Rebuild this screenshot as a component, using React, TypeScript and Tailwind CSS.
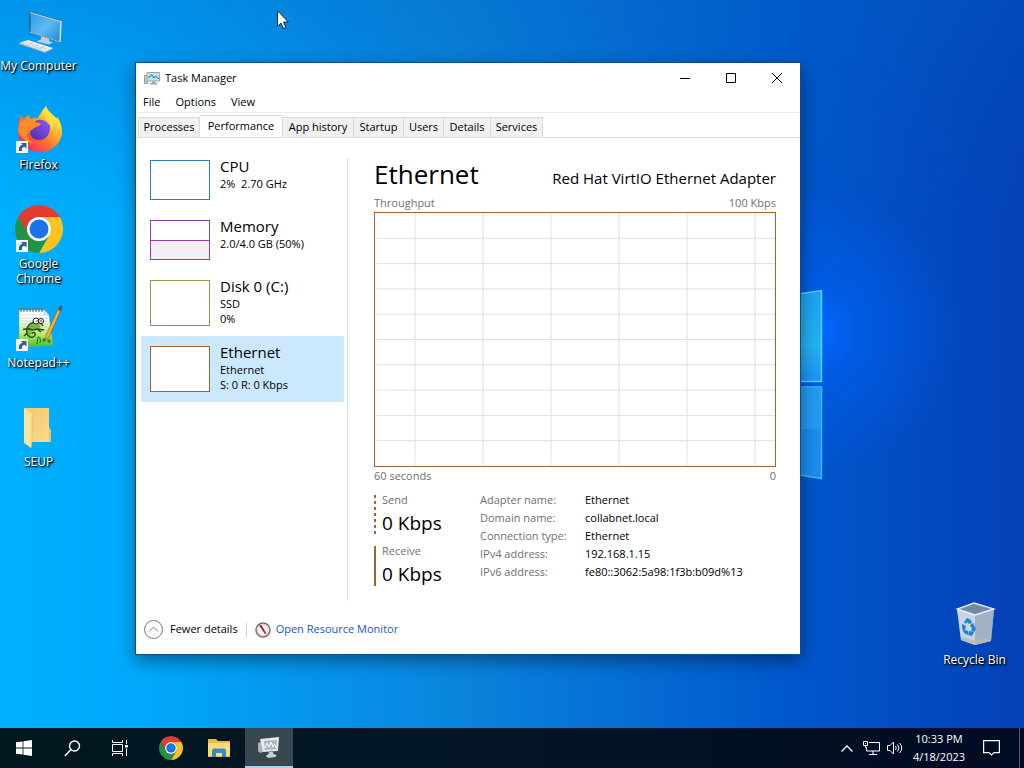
import { useState } from 'react';
import type { ReactNode } from 'react';
import clsx from 'clsx';

type TabName = 'Processes' | 'Performance' | 'App history' | 'Startup' | 'Users' | 'Details' | 'Services';

const tabs: { name: TabName; width: string }[] = [
    { name: 'Processes', width: 'w-[62px]' },
    { name: 'Performance', width: 'w-[83px]' },
    { name: 'App history', width: 'w-[71px]' },
    { name: 'Startup', width: 'w-[50px]' },
    { name: 'Users', width: 'w-10' },
    { name: 'Details', width: 'w-[47px]' },
    { name: 'Services', width: 'w-[52px]' },
];

const adapterInfo = [
    ['Adapter name:', 'Ethernet'],
    ['Domain name:', 'collabnet.local'],
    ['Connection type:', 'Ethernet'],
    ['IPv4 address:', '192.168.1.15'],
    ['IPv6 address:', 'fe80::3062:5a98:1f3b:b09d%13'],
];

function ShortcutArrow() {
    return (
        <g>
            <rect x="1" y="35" width="12" height="12" fill="#f4f6f8" />
            <path d="M4 45c-.6-3.600.8-5.800 3.600-6.200L6 37h5.500v5.500L9.600 40.700C7.500 41 6.500 42.500 7 45z" fill="#2c5f9e" />
        </g>
    );
}

function ComputerIcon() {
    return (
        <svg viewBox="0 0 48 48" className="size-12">
            <defs>
                <linearGradient id="screen" x1="0" y1="0" x2="1" y2="1">
                    <stop offset="0" stopColor="#2f9be8" />
                    <stop offset=".5" stopColor="#5fb9f4" />
                    <stop offset="1" stopColor="#1f86d6" />
                </linearGradient>
            </defs>
            <path d="M26 29l8 2v3l4 1.500-4 2-13-3 5-2z" fill="#b9cfe0" />
            <path d="M15 5l31 9-1 21-30-10z" fill="url(#screen)" stroke="#2b4c68" strokeWidth="1" />
            <path d="M15 5l31 9v1L15 6z" fill="#c9d8e4" />
            <path d="M46 14l-1 21" stroke="#d8e2ea" strokeWidth="1.500" />
            <path d="M15 25l30 10" stroke="#a9bccb" />
            <path d="M4 36l9-3 25 8-8 4z" fill="#eef1f4" />
            <path d="M4 36l26 9 8-4v1l-8 4-26-9z" fill="#a7b0b8" />
            <path d="M7 36l24 7.500M10 35l24 7.500M12 38l6-3M18 40l6-3M24 42l6-3" stroke="#b8bfc6" strokeWidth=".6" />
        </svg>
    );
}

function FirefoxIcon() {
    return (
        <svg viewBox="0 0 48 48" className="size-12">
            <defs>
                <linearGradient id="fox" x1=".9" y1=".1" x2=".15" y2=".9">
                    <stop offset="0" stopColor="#fff44f" />
                    <stop offset=".35" stopColor="#ffb52a" />
                    <stop offset=".65" stopColor="#ff6a33" />
                    <stop offset="1" stopColor="#ee2b6c" />
                </linearGradient>
                <linearGradient id="globe" x1="1" y1="0" x2="0" y2="1">
                    <stop offset="0" stopColor="#9059ff" />
                    <stop offset="1" stopColor="#4a2da8" />
                </linearGradient>
            </defs>
            <path d="M31 0c1 4 4 6 7 9 1.500 1.500 2 3 2.500 4.500L42 11c4 5 5 10 5 14 0 12-10 21-22 21S3 37 3 25c0-7 1-12 3-16 1 2 2 3 3 4 1-1 3-3 5-4 0 2 1 3 2 4 3-1.500 5-1.200 7-.5C23 10 26 8 27 5c1-2 3-3 4-5z" fill="url(#fox)" />
            <path d="M18 17c3-3 6-4 9-3 3 .5 5 2 6 4l2 1c1 9-4 15-11 15-6 0-9-4-9-9 0-3 1-6 3-8z" fill="url(#globe)" />
            <path d="M5 16c4-2 9-3 13-1 2 1.500 5 2 8 2-1 3-3 3.500-5 4-3 1-3 3-6 4l-3 3c0 6 5 9 10 9-8 2-17-5-19-13z" fill="#ff8a28" />
            <path d="M31 0c-3 5-4 9 0 13 4 3 6 7 5 12 3-3 3-7 1-10 4 1 6 6 6 10 3-7 0-12-5-16-3-3-6-5-7-9z" fill="#ffdf3c" />
            <ShortcutArrow />
        </svg>
    );
}

function ChromeShape() {
    return (
        <g>
            <path d="M3.220 12A24 24 0 0 1 44.780 12H24A12 12 0 0 0 13.610 30z" fill="#e33b2e" />
            <path d="M44.780 12A24 24 0 0 1 24 48L34.390 30A12 12 0 0 0 24 12z" fill="#fcc31e" />
            <path d="M24 48A24 24 0 0 1 3.220 12L13.610 30A12 12 0 0 0 34.390 30z" fill="#229342" />
            <circle cx="24" cy="24" r="12" fill="#fff" />
            <circle cx="24" cy="24" r="9.500" fill="#1a73e8" />
        </g>
    );
}

function NotepadIcon() {
    return (
        <svg viewBox="0 0 48 48" className="size-12">
            <defs>
                <linearGradient id="page" x1="0" y1="0" x2="0" y2="1">
                    <stop offset=".2" stopColor="#ffffff" />
                    <stop offset=".6" stopColor="#c9ee7a" />
                    <stop offset="1" stopColor="#3fc41c" />
                </linearGradient>
            </defs>
            <path d="M4 6h25l5 5 4 30-30 2H4z" fill="url(#page)" stroke="#8d9a86" strokeWidth=".6" />
            <path d="M5 11h25M5 14h28M5 17h28M5 20h29M5 23h29M5 26h29" stroke="#a8c4cc" strokeWidth=".5" />
            <path d="M29 6v5h5" fill="#e8eef0" stroke="#8d9a86" strokeWidth=".5" />
            <path d="M6 4v4M9 4v4M12 4v4M15 4v4M18 4v4M21 4v4M24 4v4M27 4v4" stroke="#566" strokeWidth="1" />
            <path d="M14 21c4-3 10-2 12 1-1 4-7 2-9 5-2 2 0 4-2 5-4-3-4-8-1-11z" fill="#70bd3c" />
            <path d="M28 22c-2-4-9-5-13-2-5 4-4 11 0 13 4 1 6-2 5-4-1-1-3-1-3 1M8 25.500l5-1 5 1.500 5-1 6 1M12 29l-3 3M22 25l4 3" fill="none" stroke="#24471b" strokeWidth="1.400" />
            <circle cx="21" cy="17" r="3" fill="#fff" stroke="#222" />
            <circle cx="26" cy="17" r="2.500" fill="#fff" stroke="#222" />
            <circle cx="22" cy="17" r=".8" fill="#111" />
            <circle cx="26" cy="17" r=".8" fill="#111" />
            <path d="M22 40l1-7c2-1 3 3 2 6M27 36h4M29 34v4M32 37h4M34 35v4" fill="none" stroke="#25542b" strokeWidth=".9" />
            <path d="M44 3l3 1-13 29-3 3v-5z" fill="#f0b43c" stroke="#80531b" strokeWidth=".6" />
            <path d="M44 3l1.500-1.500 2 1L47 5l-1 3-3-2z" fill="#52598a" />
            <ShortcutArrow />
        </svg>
    );
}

function FolderIcon() {
    return (
        <svg viewBox="0 0 48 48" className="size-12">
            <defs>
                <linearGradient id="folder" x1="0" y1="0" x2="1" y2="1">
                    <stop offset="0" stopColor="#f3c767" />
                    <stop offset="1" stopColor="#fbdc91" />
                </linearGradient>
            </defs>
            <path d="M9 5h25v19l2 4v11H16z" fill="url(#folder)" />
            <path d="M34 24l2 4v11h-2z" fill="#eec15f" />
            <path d="M9 5l8 5v29l-1 6-7-5z" fill="#ffe29b" />
            <path d="M17 10v29l-1 6" fill="none" stroke="#e3b556" strokeWidth=".6" />
        </svg>
    );
}

function RecycleIcon() {
    return (
        <svg viewBox="0 0 48 48" className="size-12">
            <path d="M6 8l17-6 20 6-3 32-16 4-14-5z" fill="#c4cfd9" opacity=".85" />
            <path d="M6 8l18 6v30l-14-5z" fill="#dfe6ec" opacity=".6" />
            <path d="M24 14l19-6-3 32-16 4z" fill="#9fafc0" opacity=".75" />
            <path d="M9 8l14-5 17 5-16 5z" fill="#7189a8" />
            <path d="M10 36l14 3 16-3v4l-16 4-14-5z" fill="#b9b9ae" opacity=".8" />
            <path d="M6 8l17-6 20 6-19 6z" fill="none" stroke="#edf2f6" strokeWidth="1.200" />
            <path d="M13 21l3-4 4 2 1 3-3 1-2-2-1 2zM22 22l3 6-2 3-3-1 1-2-2-4zM11 23l4 2-1 4 3 1v4l-4-2-2-5z" fill="#1d85d8" />
            <path d="M18 30l5 1-2 4-4-1z" fill="#1d85d8" />
        </svg>
    );
}

function TaskManagerIcon({ className }: { className: string }) {
    return (
        <svg viewBox="0 0 16 16" className={className}>
            <path d="M.5 5.500h3v8h-3z" fill="#c8ccce" stroke="#82898d" strokeWidth=".8" />
            <path d="M3 2.500h12.500v8.500H3z" fill="#c3e3f2" stroke="#9aa6ac" />
            <path d="M4 7h2l1.500-2.500L10 8l1.500-2L15 9" fill="none" stroke="#267aa5" />
            <path d="M8 11.500h3.500V13H8zM6 13h7v1.500H6z" fill="#9da5a9" />
        </svg>
    );
}

function DesktopIcon({ label, children }: { label: string; children: ReactNode }) {
    return (
        <button type="button" className="flex h-[99px] w-[77px] shrink-0 flex-col items-center gap-[3px] text-xs leading-[15px] text-white [text-shadow:1px_1px_1px_#000,1px_1px_3px_#000]">
            {children}
            <span className="w-20 text-center">{label}</span>
        </button>
    );
}

function ResourceItem({ title, lines, color, tall, active, children }: {
    title: string;
    lines: string[];
    color: string;
    tall?: boolean;
    active?: boolean;
    children?: ReactNode;
}) {
    return (
        <button
            type="button"
            className={clsx('flex w-full items-start gap-[10px] pt-2 pb-[10px] pl-[9px] text-left', active && 'bg-[#cce8ff]')}
        >
            <div className={clsx('mt-0.5 flex w-[60px] shrink-0 flex-col justify-end border bg-white', tall ? 'h-[46px]' : 'h-10', color)}>
                {children}
            </div>
            <div className="whitespace-pre">
                <p className="mb-0.5 text-[15px] leading-4">{title}</p>
                {lines.map((line) => (
                    <p key={line} className="text-[11px] leading-[15px]">{line}</p>
                ))}
            </div>
        </button>
    );
}

function ThroughputChart() {
    const rows = [10, 20, 30, 40, 50, 60, 70, 80, 90];
    const columns = [10, 27, 44, 61, 78, 95];

    return (
        <svg className="block h-[255px] w-full border border-[#a0622f] bg-white">
            {rows.map((y) => (
                <line key={y} x1="0" x2="100%" y1={`${y}%`} y2={`${y}%`} stroke="#e6dfda" />
            ))}
            {columns.map((x) => (
                <line key={x} x1={`${x}%`} x2={`${x}%`} y1="0" y2="100%" stroke="#e2dcd8" />
            ))}
        </svg>
    );
}

function TaskManager() {
    const [activeTab, setActiveTab] = useState<TabName>('Performance');

    return (
        <section className="absolute top-[62px] left-[135px] w-[666px] border border-[#0b4f86] bg-white text-[11px] text-black shadow-[0_6px_16px_rgba(0,0,0,0.4)]">
            <header className="flex h-[30px] items-center pl-2">
                <TaskManagerIcon className="mr-[5px] size-4" />
                <h1 className="flex-1">Task Manager</h1>
                <button type="button" aria-label="Minimize" className="flex h-full w-[46px] items-center justify-center">
                    <svg viewBox="0 0 10 10" className="size-[10px]"><path d="M0 5.500h10" stroke="#000" /></svg>
                </button>
                <button type="button" aria-label="Maximize" className="flex h-full w-[46px] items-center justify-center">
                    <svg viewBox="0 0 10 10" className="size-[10px]"><path d="M.5.500h9v9h-9z" fill="none" stroke="#000" /></svg>
                </button>
                <button type="button" aria-label="Close" className="flex h-full w-[46px] items-center justify-center">
                    <svg viewBox="0 0 10 10" className="size-[10px]"><path d="M0 0l10 10M10 0L0 10" stroke="#000" /></svg>
                </button>
            </header>
            <nav className="flex h-5 items-center gap-[15px] border-b border-[#ececec] pl-[7px]">
                <button type="button">File</button>
                <button type="button">Options</button>
                <button type="button">View</button>
            </nav>
            <div role="tablist" className="flex h-[25px] items-end border-b border-[#dcdcdc] pt-0.5 pl-0.5">
                {tabs.map((tab) => (
                    <button
                        key={tab.name}
                        type="button"
                        role="tab"
                        aria-selected={activeTab === tab.name}
                        className={clsx(
                            'shrink-0 border-t border-r border-[#d9d9d9] whitespace-nowrap first:border-l',
                            tab.width,
                            activeTab === tab.name ? 'h-[22px] bg-white' : 'h-5 bg-[#f0f0f0]',
                        )}
                        onClick={() => setActiveTab(tab.name)}
                    >
                        {tab.name}
                    </button>
                ))}
            </div>
            <div className="flex h-[467px] pt-3">
                <div className="w-[208px] shrink-0 pl-[5px]">
                    <ResourceItem title="CPU" lines={['2%  2.70 GHz']} color="border-[#2b7fae]" />
                    <ResourceItem title="Memory" lines={['2.0/4.0 GB (50%)']} color="border-[#8b3fa8]">
                        <div className="h-[19px] border-t border-[#8b3fa8] bg-[#f3eef5]" />
                    </ResourceItem>
                    <ResourceItem title="Disk 0 (C:)" lines={['SSD', '0%']} color="border-[#7ba04b]" tall />
                    <ResourceItem title="Ethernet" lines={['Ethernet', 'S: 0 R: 0 Kbps']} color="border-[#a0622f]" tall active />
                </div>
                <div className="mt-2 mb-1 ml-[3px] w-px bg-[#dedede]" />
                <div className="flex-1 pr-6 pl-[26px]">
                    <div className="flex h-[45px] items-baseline justify-between pt-1">
                        <h2 className="text-[26px] leading-10">Ethernet</h2>
                        <p className="text-[15px]">Red Hat VirtIO Ethernet Adapter</p>
                    </div>
                    <div className="flex justify-between pb-px leading-4 text-[#707070]">
                        <span>Throughput</span>
                        <span>100 Kbps</span>
                    </div>
                    <ThroughputChart />
                    <div className="flex justify-between pt-px pb-[7px] leading-4 text-[#707070]">
                        <span>60 seconds</span>
                        <span>0</span>
                    </div>
                    <div className="flex">
                        <div className="flex w-[106px] flex-col gap-3 pt-1">
                            <div className="flex h-[39px] gap-[6px]">
                                <div className="w-0.5 bg-[repeating-linear-gradient(to_bottom,#b5602c_0,#b5602c_3px,transparent_3px,transparent_6px)]" />
                                <div>
                                    <p className="leading-[10px] text-[#707070]">Send</p>
                                    <p className="text-[19px] leading-9">0 Kbps</p>
                                </div>
                            </div>
                            <div className="flex h-10 gap-[6px]">
                                <div className="w-0.5 bg-[#a0622f]" />
                                <div>
                                    <p className="leading-[10px] text-[#707070]">Receive</p>
                                    <p className="text-[19px] leading-9">0 Kbps</p>
                                </div>
                            </div>
                        </div>
                        <table className="h-[90px] text-left leading-[18px]">
                            <tbody>
                                {adapterInfo.map(([label, value]) => (
                                    <tr key={label}>
                                        <th scope="row" className="w-[105px] p-0 font-normal text-[#707070]">{label}</th>
                                        <td className="p-0">{value}</td>
                                    </tr>
                                ))}
                            </tbody>
                        </table>
                    </div>
                </div>
            </div>
            <footer className="flex h-[49px] items-center pl-2">
                <button type="button" className="flex items-center gap-[7px]">
                    <svg viewBox="0 0 19 19" className="size-[19px]" fill="none" stroke="#7a7a7a">
                        <circle cx="9.500" cy="9.500" r="9" />
                        <path d="M5 11.500l4.500-4.500 4.500 4.500" />
                    </svg>
                    Fewer details
                </button>
                <div className="mx-2 h-[14px] w-px bg-[#cfcfcf]" />
                <a href="#resource-monitor" className="flex items-center gap-[5px] text-[#0f5cc0]">
                    <svg viewBox="0 0 16 16" className="size-4">
                        <circle cx="8" cy="8" r="7" fill="#eceae6" stroke="#77736d" strokeWidth="1.500" />
                        <circle cx="8" cy="8" r="5" fill="#fff" stroke="#c5c0ba" strokeWidth=".6" />
                        <path d="M4 3.500l2.500-.5 5 8.500-1.500.5z" fill="#c4163a" />
                    </svg>
                    Open Resource Monitor
                </a>
            </footer>
        </section>
    );
}

function Taskbar() {
    const button = 'flex h-10 w-12 shrink-0 items-center justify-center';

    return (
        <footer className="flex h-10 shrink-0 items-center bg-linear-to-r from-[#03171f] via-[#021426] to-[#020b24] text-white">
            <button type="button" aria-label="Start" className={button}>
                <svg viewBox="0 0 16 16" className="size-4" fill="#fff">
                    <path d="M0 2.300L6.600 1.400V7.600H0zM7.400 1.300L16 0v7.600H7.400zM0 8.400h6.600v6.200L0 13.700zM7.400 8.400H16V16l-8.600-1.200z" />
                </svg>
            </button>
            <button type="button" aria-label="Search" className={button}>
                <svg viewBox="0 0 17 17" className="size-[17px]" fill="none" stroke="#fff" strokeWidth="1.400">
                    <circle cx="10.500" cy="6" r="5" />
                    <path d="M7 9.500L.8 16" />
                </svg>
            </button>
            <button type="button" aria-label="Task View" className={button}>
                <svg viewBox="0 0 16 16" className="size-4" fill="none" stroke="#fff">
                    <path d="M.5 0v2.500h10V0M.5 4.500h10v7H.5zM.5 16v-2.500h10V16M14.500 0v4M14.500 8.500V16" />
                    <path d="M13 5h3v2.500h-3z" fill="#fff" stroke="none" />
                </svg>
            </button>
            <button type="button" aria-label="Google Chrome" className="ml-[3px] flex h-10 w-12 items-center justify-center">
                <svg viewBox="0 0 48 48" className="size-6"><ChromeShape /></svg>
            </button>
            <button type="button" aria-label="File Explorer" className={button}>
                <svg viewBox="0 0 22 18" className="h-[18px] w-[22px]">
                    <path d="M0 0h8l2 2h12v16H0z" fill="#f0b93c" />
                    <path d="M0 4h22v13H0z" fill="#ffdb78" />
                    <path d="M4 18v-7l1.500-1.500h11L18 11v7h-4v-4H8v4z" fill="#3d88c7" />
                </svg>
            </button>
            <button type="button" aria-label="Task Manager" className="ml-0.5 flex h-10 w-12 items-center justify-center border-b-2 border-[#9fd4f5] bg-[#36474f]">
                <svg viewBox="0 0 24 22" className="h-[22px] w-6">
                    <path d="M1 7l5-2v11l-3 1-2-2z" fill="#aab2b5" />
                    <path d="M3 3l19-2-1 14-15 1z" fill="#e4e9eb" />
                    <path d="M7 5l13-1-1 9-11 1z" fill="#a9b6bb" />
                    <path d="M8 12l2-5 2 4 2-5 2 5 1.500-3L19 12" fill="none" stroke="#fff" />
                    <path d="M12 16h4l.5 2 3 1-1 2-7 1-3-2 3-2z" fill="#c9d0d2" />
                </svg>
            </button>
            <div className="flex flex-1 items-center justify-end text-[11px]">
                <button type="button" aria-label="Show hidden icons" className="flex h-10 w-6 items-center justify-center">
                    <svg viewBox="0 0 12 7" className="h-[7px] w-3" fill="none" stroke="#fff" strokeWidth="1.300"><path d="M.5 6.500L6 1l5.500 5.500" /></svg>
                </button>
                <button type="button" aria-label="Network" className="flex h-10 w-6 items-center justify-center">
                    <svg viewBox="0 0 17 14" className="h-[14px] w-[17px]" fill="none" stroke="#fff">
                        <path d="M6 1.500h10.500v8.500H3.500V6.500M6 13.500h8M10 10v3.500" />
                        <path d="M.5.500h4v4h-4zM2 2.500h1M2.500 4.500v2h1" />
                    </svg>
                </button>
                <button type="button" aria-label="Volume" className="flex h-10 w-6 items-center justify-center">
                    <svg viewBox="0 0 17 14" className="h-[14px] w-[17px]" fill="none" stroke="#fff">
                        <path d="M.5 4.500H3L6.500 1v12L3 9.500H.5zM8.500 5q1.500 2 0 4M10.500 3.500q3 3.500 0 7M12.500 2q4.500 5 0 10" />
                    </svg>
                </button>
                <button type="button" className="w-16 text-center leading-[18px]">
                    <time dateTime="2023-04-18T22:33" className="block">10:33 PM<br />4/18/2023</time>
                </button>
                <button type="button" aria-label="Notifications" className="flex h-10 w-10 items-center justify-center">
                    <svg viewBox="0 0 17 16" className="h-4 w-[17px]" fill="none" stroke="#fff" strokeWidth="1.200">
                        <path d="M.6.600h15.800v12H11L8.500 15 6 12.600H.6z" />
                    </svg>
                </button>
                <div className="mr-1 ml-2 h-10 w-px bg-[#4b5a72]" />
            </div>
        </footer>
    );
}

export default function App() {
    return (
        <div className="flex min-h-screen flex-col overflow-hidden font-['Open_Sans','Noto_Sans',sans-serif]">
            <main className="relative flex flex-1 items-stretch justify-between overflow-hidden bg-[radial-gradient(circle_at_820px_330px,#0068ff_0,#0060f0aa_40px,transparent_140px),linear-gradient(to_bottom,#0060c055,transparent_30%),linear-gradient(to_right,#00b0ff_0%,#00a8fb_14%,#0a84dc_45%,#0056cc_78%,#0440b6_100%)]">
                <svg viewBox="0 0 60 200" className="absolute top-[285px] left-[764px] h-[200px] w-[60px]">
                    <defs>
                        <linearGradient id="pane" x1="0" y1="0" x2="0" y2="1">
                            <stop offset="0" stopColor="#1ea0f4" />
                            <stop offset=".6" stopColor="#22b2f0" />
                            <stop offset="1" stopColor="#1c90f4" />
                        </linearGradient>
                    </defs>
                    <path d="M0 14L57.500 5.500V96.500H0z" fill="url(#pane)" stroke="#4fd6fb" strokeWidth="1.500" />
                    <path d="M0 102H57.500V193.500L0 184z" fill="#1b8cf0" stroke="#3cb8f8" strokeWidth="1.500" />
                    <path d="M0 102H57v42H0z" fill="#28a4f2" opacity=".6" />
                </svg>
                <div className="flex flex-col pt-[7px]">
                    <DesktopIcon label="My Computer"><ComputerIcon /></DesktopIcon>
                    <DesktopIcon label="Firefox"><FirefoxIcon /></DesktopIcon>
                    <DesktopIcon label="Google Chrome">
                        <svg viewBox="0 0 48 48" className="size-12"><ChromeShape /><ShortcutArrow /></svg>
                    </DesktopIcon>
                    <DesktopIcon label="Notepad++"><NotepadIcon /></DesktopIcon>
                    <DesktopIcon label="SEUP"><FolderIcon /></DesktopIcon>
                </div>
                <div className="flex flex-col justify-end pr-[11px] pb-7">
                    <DesktopIcon label="Recycle Bin"><RecycleIcon /></DesktopIcon>
                </div>
                <TaskManager />
                <svg viewBox="0 0 12 19" className="absolute top-[10px] left-[277px] h-[19px] w-3">
                    <path d="M.5.800v15.500L4 13l2.500 5.500 2.300-1L6.500 12h4.800z" fill="#fff" stroke="#000" strokeWidth=".8" />
                </svg>
            </main>
            <Taskbar />
        </div>
    );
}
